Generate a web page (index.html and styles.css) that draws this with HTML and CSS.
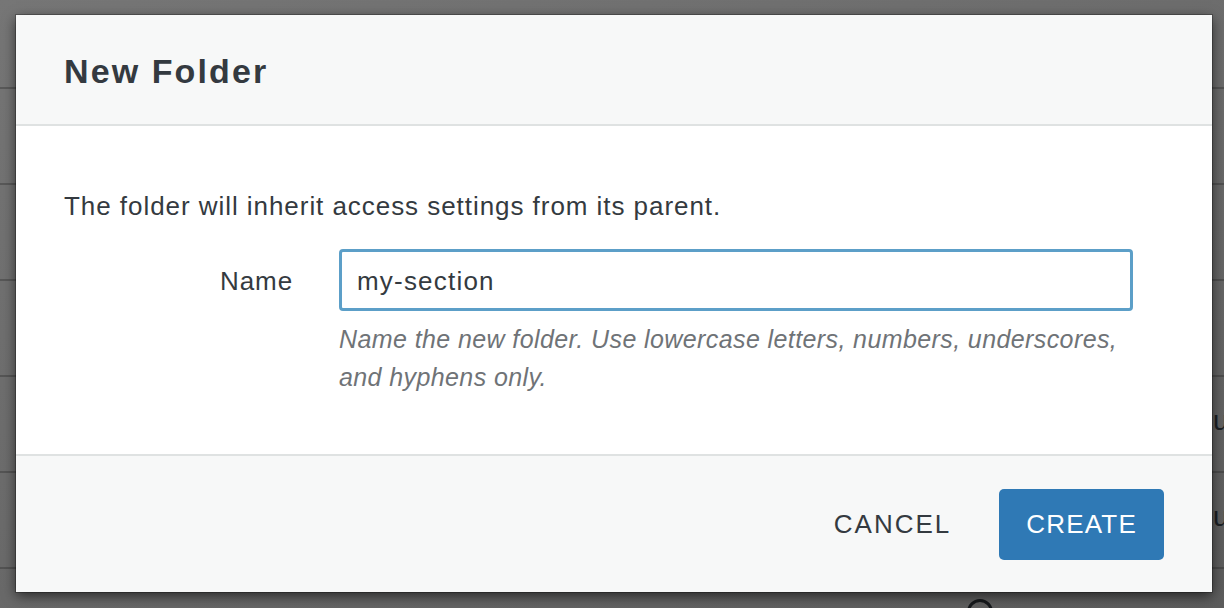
FILE: index.html
```html
<!DOCTYPE html>
<html lang="en">
<head>
<meta charset="utf-8">
<title>New Folder</title>
<link rel="stylesheet" href="styles.css">
</head>
<body>
<div class="page">
  <div class="row row-first"></div>
  <div class="row"></div>
  <div class="row"></div>
  <div class="row"></div>
  <div class="row"><span class="cell-end">u</span></div>
  <div class="row"><span class="cell-end">u</span></div>
  <div class="row row-last"><span class="circle"></span></div>
</div>

<div class="modal" role="dialog" aria-labelledby="modal-title">
  <div class="modal-header">
    <h1 class="modal-title" id="modal-title">New Folder</h1>
  </div>
  <div class="modal-body">
    <p class="intro">The folder will inherit access settings from its parent.</p>
    <div class="form-row">
      <label class="form-label" for="name">Name</label>
      <input class="form-input" id="name" type="text" value="my-section">
      <div class="form-help">Name the new folder. Use lowercase letters, numbers, underscores, and hyphens only.</div>
    </div>
  </div>
  <div class="modal-footer">
    <button class="btn btn-link" type="button">CANCEL</button>
    <button class="btn btn-primary" type="button">CREATE</button>
  </div>
</div>
</body>
</html>
```

FILE: styles.css
```css
html, body {
  margin: 0;
  padding: 0;
  height: 100%;
  overflow: hidden;
}

body {
  font-family: "Liberation Sans", Arial, sans-serif;
  background: linear-gradient(160deg, #767676 0%, #6b6b6b 50%, #5c5c5c 100%);
  color: #343a40;
}

.page {
  display: flex;
  flex-direction: column;
  width: 1224px;
  height: 608px;
  overflow: hidden;
}

.row {
  height: 94px;
  border-bottom: 2px solid rgba(40, 40, 40, 0.35);
  display: flex;
  align-items: center;
  flex-shrink: 0;
}

.row-first {
  height: 87px;
}

.row-last {
  height: auto;
  flex: 1 1 0;
  min-height: 0;
  overflow: hidden;
  border-bottom: none;
  align-items: flex-start;
}

.cell-end {
  padding-left: 1213px;
  font-size: 28px;
  color: #1c2024;
  line-height: 1;
  margin-top: -6px;
  white-space: nowrap;
}

.circle {
  flex-shrink: 0;
  margin-left: 967px;
  margin-top: 30px;
  width: 20px;
  height: 20px;
  border: 3px solid #16191c;
  border-radius: 50%;
}

.modal {
  position: absolute;
  left: 16px;
  top: 15px;
  width: 1196px;
  background: #ffffff;
  box-shadow: 0 0 0 1px rgba(0, 0, 0, 0.25), 0 4px 12px rgba(0, 0, 0, 0.6);
  display: flex;
  flex-direction: column;
}

.modal-header {
  height: 109px;
  padding: 0 48px;
  display: flex;
  align-items: center;
  background: #f7f8f8;
  border-bottom: 2px solid #dfe2e2;
}

.modal-title {
  margin: 0;
  font-size: 34px;
  font-weight: 700;
  letter-spacing: 2.1px;
  color: #343a40;
  padding-top: 4px;
}

.modal-body {
  padding: 62px 48px 58px;
}

.intro {
  margin: 0;
  font-size: 26px;
  line-height: 36px;
  letter-spacing: 0.95px;
  color: #343a40;
}

.form-row {
  margin-top: 25px;
  display: grid;
  grid-template-columns: 229px 794px;
  column-gap: 46px;
  align-items: center;
}

.form-label {
  text-align: right;
  font-size: 26px;
  letter-spacing: 0.9px;
  color: #343a40;
  padding-top: 2px;
}

.form-input {
  box-sizing: border-box;
  height: 62px;
  width: 100%;
  margin: 0;
  padding: 2px 15px 0;
  border: 3px solid #5c9fc8;
  border-radius: 4px;
  outline: none;
  font-family: "Liberation Sans", Arial, sans-serif;
  font-size: 26px;
  letter-spacing: 1.2px;
  color: #343a40;
  background: #ffffff;
}

.form-help {
  grid-column: 2;
  margin-top: 9px;
  font-size: 25px;
  font-style: italic;
  line-height: 38px;
  letter-spacing: 0.4px;
  color: #6f7377;
}

.modal-footer {
  height: 136px;
  padding: 0 48px;
  display: flex;
  justify-content: flex-end;
  align-items: center;
  gap: 24px;
  background: #f7f8f8;
  border-top: 2px solid #dfe2e2;
}

.btn {
  font-family: "Liberation Sans", Arial, sans-serif;
  font-size: 26px;
  letter-spacing: 1.2px;
  height: 71px;
  margin: 0;
  border: none;
  border-radius: 5px;
  cursor: pointer;
}

.btn-link {
  background: transparent;
  color: #343a40;
  padding: 0 24px;
  letter-spacing: 2px;
}

.btn-primary {
  background: #2f79b5;
  color: #ffffff;
  padding: 0 27px;
  min-width: 164px;
}
```
